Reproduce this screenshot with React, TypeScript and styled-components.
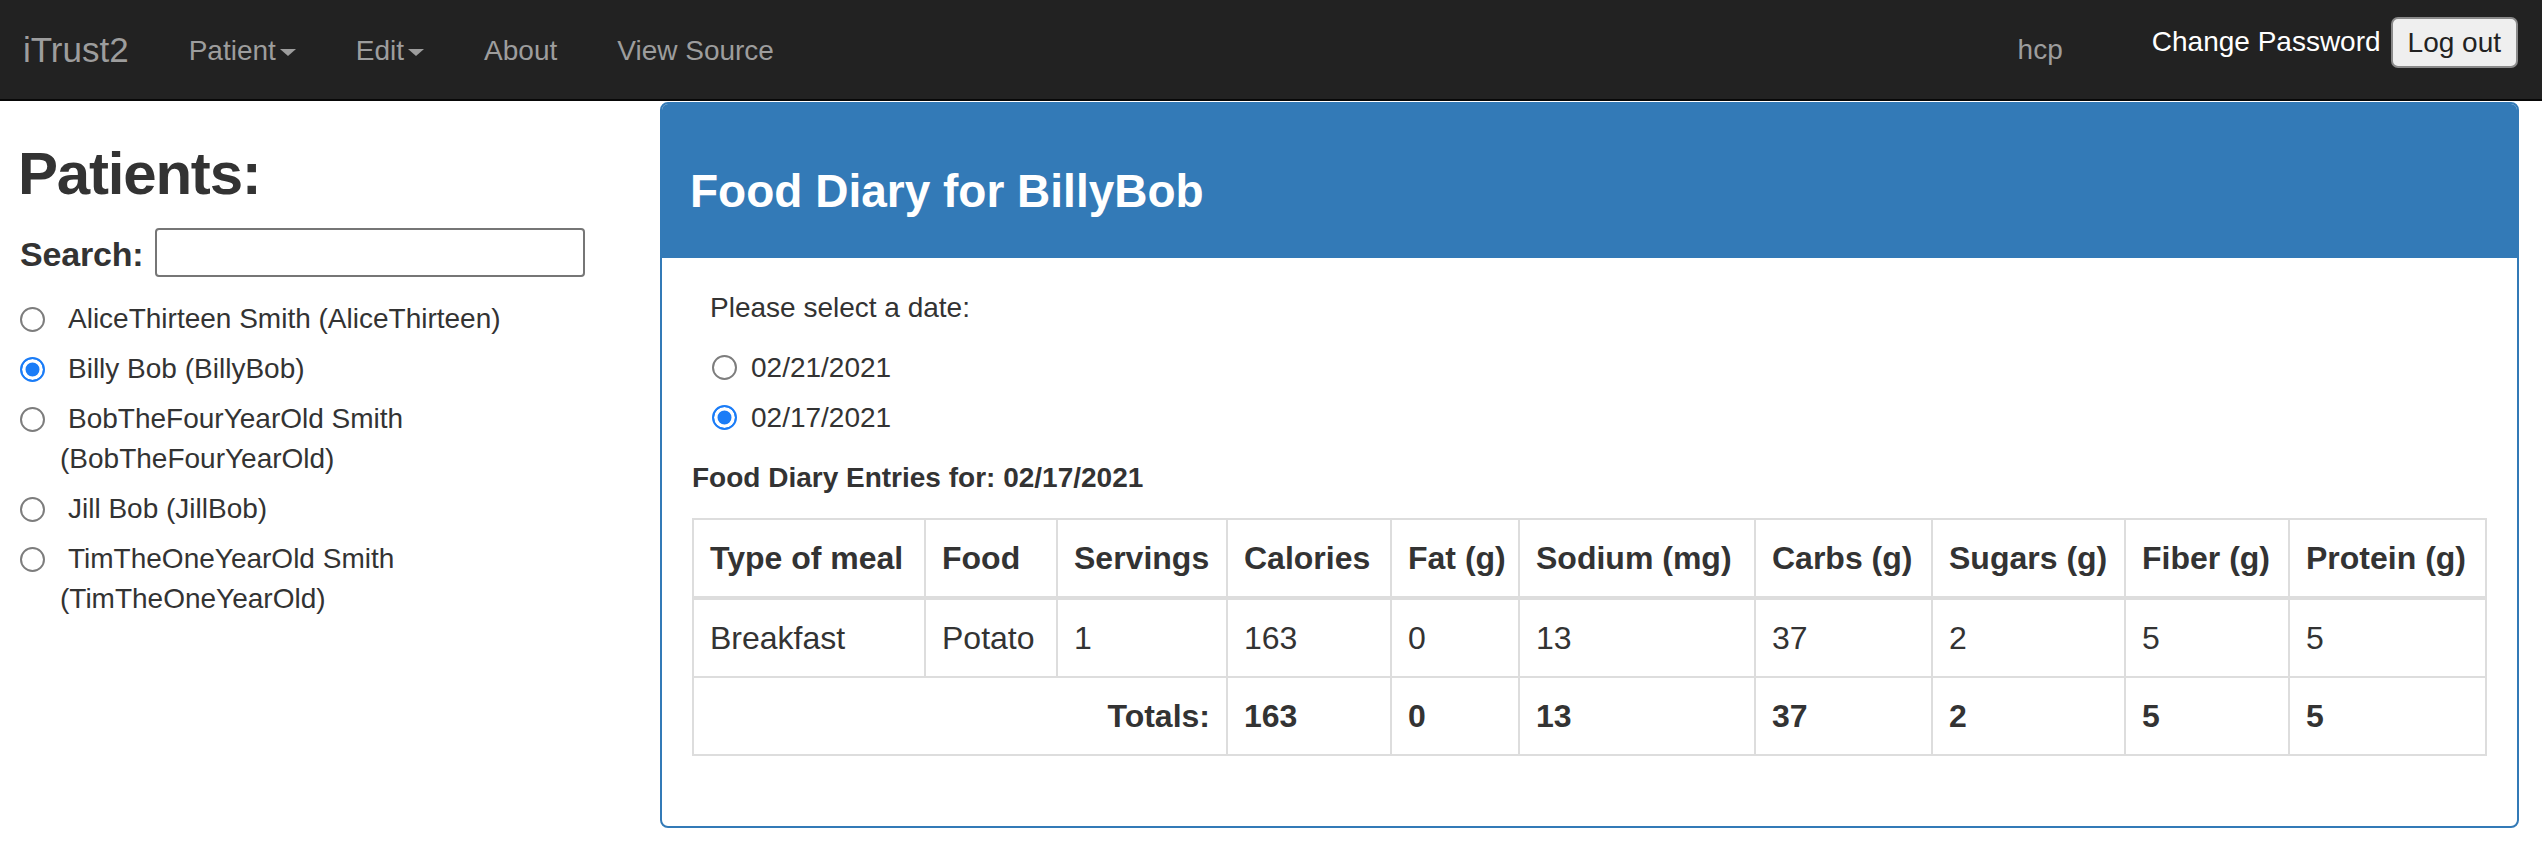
import React from "react";
import styled, { createGlobalStyle } from "styled-components";

const Global = createGlobalStyle`
  html, body { margin: 0; padding: 0; background: #fff; }
  body {
    font-family: "Liberation Sans", Arial, Helvetica, sans-serif;
    font-size: 28px;
    line-height: 40px;
    color: #333;
  }
  * { box-sizing: border-box; }
`;

const Navbar = styled.nav`
  display: flex;
  align-items: flex-start;
  height: 101px;
  background: #222;
  border-bottom: 2px solid #080808;
`;

const Brand = styled.a`
  padding: 30px 30px 0 23px;
  font-size: 35px;
  line-height: 40px;
  color: #9d9d9d;
  text-decoration: none;
`;

const NavItem = styled.a`
  display: flex;
  align-items: center;
  padding: 31px 30px 0;
  line-height: 40px;
  color: #9d9d9d;
  text-decoration: none;
`;

const Caret = styled.span`
  display: inline-block;
  width: 0;
  height: 0;
  margin-left: 4px;
  margin-top: 2px;
  border-top: 7px solid #9d9d9d;
  border-left: 8px solid transparent;
  border-right: 8px solid transparent;
`;

const NavRight = styled.div`
  margin-left: auto;
  display: flex;
  align-items: flex-start;
  padding-right: 24px;
`;

const NavText = styled.span`
  padding-top: 30px;
  line-height: 40px;
  color: #9d9d9d;
  margin-right: 89px;
`;

const NavLinkWhite = styled.a`
  margin-top: 22px;
  line-height: 40px;
  color: #fff;
  text-decoration: none;
  margin-right: 10px;
`;

const LogoutButton = styled.button`
  margin-top: 17px;
  height: 51px;
  padding: 0 15px;
  font-family: inherit;
  font-size: 28px;
  color: #222;
  background: #efefef;
  border: 2px solid #8a8a8a;
  border-radius: 7px;
`;

const Main = styled.div`
  display: flex;
  align-items: flex-start;
`;

const Sidebar = styled.aside`
  width: 640px;
  flex: none;
  padding: 0 20px;
`;

const SideTitle = styled.h2`
  margin: 40px 0 0 -2px;
  font-size: 60px;
  line-height: 66px;
  font-weight: 700;
  letter-spacing: -1.2px;
`;

const SearchRow = styled.div`
  display: flex;
  align-items: center;
  height: 49px;
  margin-top: 21px;
`;

const SearchLabel = styled.label`
  font-size: 34px;
  font-weight: 700;
  line-height: 40px;
  margin-top: 3px;
  letter-spacing: -0.2px;
`;

const SearchInput = styled.input`
  margin-left: 12px;
  width: 430px;
  height: 49px;
  border: 2px solid #767676;
  border-radius: 4px;
  background: #fff;
  font-size: 28px;
`;

const PatientList = styled.div`
  margin-top: 22px;
  display: flex;
  flex-direction: column;
  gap: 10px;
`;

const PatientLabel = styled.label`
  position: relative;
  display: block;
  padding-left: 40px;
  line-height: 40px;
  text-indent: 8px;
`;

const Radio = styled.input.attrs({ type: "radio" })`
  appearance: none;
  -webkit-appearance: none;
  width: 25px;
  height: 25px;
  margin: 0;
  flex: none;
  border-radius: 50%;
  border: 2px solid #7d7d7d;
  background: #fff;
  &:checked {
    border-color: #1a7cf7;
    background: #1a7cf7;
    box-shadow: inset 0 0 0 3.5px #fff;
  }
`;

const SideRadio = styled(Radio)`
  position: absolute;
  left: 0;
  top: 7.5px;
`;

const Content = styled.main`
  flex: 1;
  padding: 1px 24px 0 20px;
`;

const Panel = styled.section`
  border: 2px solid #337ab7;
  border-radius: 8px;
  background: #fff;
  overflow: hidden;
`;

const PanelHeading = styled.div`
  background: #337ab7;
  padding: 62px 28px 41px;
`;

const PanelTitle = styled.h3`
  margin: 0;
  font-size: 46px;
  line-height: 1.1;
  font-weight: 700;
  color: #fff;
`;

const PanelBody = styled.div`
  padding: 30px;
`;

const Prompt = styled.div`
  margin-left: 18px;
  line-height: 40px;
`;

const DateList = styled.div`
  margin: 20px 0 0 20px;
  display: flex;
  flex-direction: column;
  gap: 10px;
`;

const DateOption = styled.label`
  display: flex;
  align-items: center;
  gap: 14px;
  line-height: 40px;
`;

const EntriesTitle = styled.div`
  margin-top: 20px;
  font-weight: 700;
  line-height: 40px;
`;

const Table = styled.table`
  width: 100%;
  margin: 20px 0 40px;
  border-collapse: collapse;
  table-layout: fixed;
  border: 2px solid #ddd;
  font-size: 32px;
  line-height: 44px;
`;

const Col = styled.col<{ $w: number }>`
  width: ${(p) => p.$w}px;
`;

const Th = styled.th`
  padding: 16px;
  text-align: left;
  font-weight: 700;
  vertical-align: bottom;
  border: 2px solid #ddd;
  border-bottom-width: 4px;
  white-space: nowrap;
`;

const Td = styled.td<{ $bold?: boolean; $right?: boolean }>`
  padding: 16px;
  border: 2px solid #ddd;
  font-weight: ${(p) => (p.$bold ? 700 : 400)};
  text-align: ${(p) => (p.$right ? "right" : "left")};
  white-space: nowrap;
`;

const patients = [
  { name: "AliceThirteen Smith (AliceThirteen)", checked: false },
  { name: "Billy Bob (BillyBob)", checked: true },
  { name: "BobTheFourYearOld Smith (BobTheFourYearOld)", checked: false },
  { name: "Jill Bob (JillBob)", checked: false },
  { name: "TimTheOneYearOld Smith (TimTheOneYearOld)", checked: false },
];

const headers = [
  "Type of meal",
  "Food",
  "Servings",
  "Calories",
  "Fat (g)",
  "Sodium (mg)",
  "Carbs (g)",
  "Sugars (g)",
  "Fiber (g)",
  "Protein (g)",
];
const widths = [232, 132, 170, 164, 128, 236, 177, 193, 164, 197];
const row = ["Breakfast", "Potato", "1", "163", "0", "13", "37", "2", "5", "5"];
const totals = ["163", "0", "13", "37", "2", "5", "5"];

export default function App() {
  return (
    <>
      <Global />
      <Navbar>
        <Brand href="#">iTrust2</Brand>
        <NavItem href="#">
          Patient
          <Caret />
        </NavItem>
        <NavItem href="#">
          Edit
          <Caret />
        </NavItem>
        <NavItem href="#">About</NavItem>
        <NavItem href="#">View Source</NavItem>
        <NavRight>
          <NavText>hcp</NavText>
          <NavLinkWhite href="#">Change Password</NavLinkWhite>
          <LogoutButton>Log out</LogoutButton>
        </NavRight>
      </Navbar>
      <Main>
        <Sidebar>
          <SideTitle>Patients:</SideTitle>
          <SearchRow>
            <SearchLabel>Search:</SearchLabel>
            <SearchInput type="text" />
          </SearchRow>
          <PatientList>
            {patients.map((p) => (
              <PatientLabel key={p.name}>
                <SideRadio name="patient" defaultChecked={p.checked} />
                {p.name}
              </PatientLabel>
            ))}
          </PatientList>
        </Sidebar>
        <Content>
          <Panel>
            <PanelHeading>
              <PanelTitle>Food Diary for BillyBob</PanelTitle>
            </PanelHeading>
            <PanelBody>
              <Prompt>Please select a date:</Prompt>
              <DateList>
                <DateOption>
                  <Radio name="date" />
                  02/21/2021
                </DateOption>
                <DateOption>
                  <Radio name="date" defaultChecked />
                  02/17/2021
                </DateOption>
              </DateList>
              <EntriesTitle>Food Diary Entries for: 02/17/2021</EntriesTitle>
              <Table>
                <colgroup>
                  {widths.map((w, i) => (
                    <Col key={i} $w={w} />
                  ))}
                </colgroup>
                <thead>
                  <tr>
                    {headers.map((h) => (
                      <Th key={h}>{h}</Th>
                    ))}
                  </tr>
                </thead>
                <tbody>
                  <tr>
                    {row.map((c, i) => (
                      <Td key={i}>{c}</Td>
                    ))}
                  </tr>
                  <tr>
                    <Td colSpan={3} $bold $right>
                      Totals:
                    </Td>
                    {totals.map((c, i) => (
                      <Td key={i} $bold>
                        {c}
                      </Td>
                    ))}
                  </tr>
                </tbody>
              </Table>
            </PanelBody>
          </Panel>
        </Content>
      </Main>
    </>
  );
}
